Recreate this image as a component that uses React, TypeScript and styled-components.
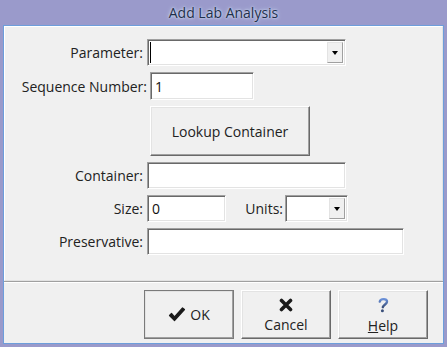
import React from "react";
import styled, { createGlobalStyle, css } from "styled-components";

const Global = createGlobalStyle`
  html, body { margin: 0; padding: 0; background: #9a9acb; }
  body { font-family: "Open Sans", "Noto Sans", "Liberation Sans", sans-serif; }
  * { box-sizing: border-box; }
`;

const Window = styled.div`
  width: 447px;
  height: 347px;
  background: #9a9acb;
  display: flex;
  flex-direction: column;
`;

const TitleBar = styled.div`
  height: 25px;
  display: flex;
  align-items: center;
  justify-content: center;
  font-size: 14px;
  color: #1f2f4a;
  text-shadow: 0 0 4px #c8dcf4, 0 0 2px #dfeaf8;
`;

const Client = styled.div`
  flex: 1;
  margin: 0 3px 3px 3px;
  border: 1px solid #6d9edb;
  background: #f0f0f0;
  display: flex;
  flex-direction: column;
`;

const FormPanel = styled.div`
  height: 255px;
  border-top: 1px solid #ffffff;
  border-left: 1px solid #ffffff;
  border-right: 1px solid #e2e2e2;
  border-bottom: 1px solid #e2e2e2;
  padding-top: 12px;
  display: flex;
  flex-direction: column;
  gap: 6px;
`;

const Row = styled.div<{ $h?: number; $indent?: number }>`
  display: flex;
  align-items: center;
  height: ${(p) => p.$h ?? 27}px;
  padding-left: ${(p) => p.$indent ?? 0}px;
`;

const Label = styled.label<{ $w: number; $gap?: number }>`
  width: ${(p) => p.$w}px;
  margin-right: ${(p) => p.$gap ?? 4}px;
  text-align: right;
  font-size: 14px;
  color: #222;
  white-space: nowrap;
`;

const sunken = css`
  border-top: 1px solid #a0a0a0;
  border-left: 1px solid #a0a0a0;
  border-right: 1px solid #ffffff;
  border-bottom: 1px solid #ffffff;
  box-shadow: inset 1px 1px 0 #696969, inset -1px -1px 0 #e3e3e3;
  background: #ffffff;
`;

const TextBox = styled.div<{ $w: number }>`
  ${sunken};
  width: ${(p) => p.$w}px;
  height: 100%;
  display: flex;
  align-items: center;
  padding-left: 4px;
  font-size: 14px;
  color: #111;
`;

const Combo = styled.div<{ $w: number }>`
  ${sunken};
  width: ${(p) => p.$w}px;
  height: 100%;
  display: flex;
  justify-content: flex-end;
  padding: 2px;
`;

const Caret = styled.div`
  width: 1px;
  height: 100%;
  background: #000;
  margin-right: auto;
`;

const DropBtn = styled.div`
  width: 16px;
  height: 100%;
  background: #f0f0f0;
  border-top: 1px solid #e3e3e3;
  border-left: 1px solid #e3e3e3;
  border-right: 1px solid #a0a0a0;
  border-bottom: 1px solid #a0a0a0;
  display: flex;
  align-items: center;
  justify-content: center;
  &::after {
    content: "";
    border-left: 3.5px solid transparent;
    border-right: 3.5px solid transparent;
    border-top: 4px solid #000;
  }
`;

const raised = css`
  background: #f0f0f0;
  border-top: 1px solid #ffffff;
  border-left: 1px solid #ffffff;
  border-right: 1px solid #696969;
  border-bottom: 1px solid #696969;
  box-shadow: inset -1px -1px 0 #a0a0a0, inset 1px 1px 0 #e3e3e3;
  font-family: inherit;
  color: #222;
  padding: 0;
`;

const LookupButton = styled.button`
  ${raised};
  width: 160px;
  height: 50px;
  font-size: 14px;
`;

const ButtonBar = styled.div`
  flex: 1;
  border-top: 1px solid #a0a0a0;
  box-shadow: inset 0 1px 0 #ffffff;
  display: flex;
  justify-content: flex-end;
  align-items: flex-start;
  gap: 7px;
  padding: 8px 15px 0 0;
`;

const DialogButton = styled.button<{ $default?: boolean }>`
  ${raised};
  width: 90px;
  height: 49px;
  font-size: 14px;
  display: flex;
  flex-direction: column;
  align-items: center;
  justify-content: center;
  gap: 3px;
  padding-top: 2px;
  ${(p) =>
    p.$default &&
    css`
      outline: 1px solid #7a7a7a;
      outline-offset: -1px;
      border-right-color: #555;
      border-bottom-color: #555;
      flex-direction: row;
      gap: 4px;
      padding-top: 0;
    `}
`;

const Underline = styled.span`
  text-decoration: underline;
`;

const CheckIcon = () => (
  <svg width="18" height="16" viewBox="0 0 18 16">
    <path d="M1.5 8.5 L6.5 13.5 L16.5 2.5 L14.5 1 L6.5 10 L3.5 6.5 Z" fill="#1a1a1a" stroke="#1a1a1a" strokeWidth="1.2" strokeLinejoin="round" />
  </svg>
);

const XIcon = () => (
  <svg width="14" height="14" viewBox="0 0 14 14">
    <path d="M2.5 2.5 L11.5 11.5 M11.5 2.5 L2.5 11.5" stroke="#1a1a1a" strokeWidth="3.6" strokeLinecap="round" />
  </svg>
);

const HelpIcon = () => (
  <svg width="12" height="16" viewBox="0 0 12 16">
    <defs>
      <linearGradient id="hq" x1="0" y1="0" x2="0" y2="1">
        <stop offset="0" stopColor="#6a90d8" />
        <stop offset="1" stopColor="#3a4f7a" />
      </linearGradient>
    </defs>
    <path d="M2.8 4.6 C3.2 1.4 10.6 1.2 10 4.8 C9.6 7.4 6.6 7.4 5.8 10.2" fill="none" stroke="url(#hq)" strokeWidth="2.4" strokeLinecap="round" />
    <circle cx="5.4" cy="13.8" r="1.5" fill="#3a4f7a" />
  </svg>
);

export default function App() {
  return (
    <>
      <Global />
      <Window>
        <TitleBar>Add Lab Analysis</TitleBar>
        <Client>
          <FormPanel>
            <Row>
              <Label $w={138}>Parameter:</Label>
              <Combo $w={199}>
                <Caret />
                <DropBtn />
              </Combo>
            </Row>
            <Row $h={28}>
              <Label $w={142} $gap={3}>Sequence Number:</Label>
              <TextBox $w={104}>1</TextBox>
            </Row>
            <Row $h={50} $indent={145}>
              <LookupButton>Lookup Container</LookupButton>
            </Row>
            <Row>
              <Label $w={138}>Container:</Label>
              <TextBox $w={199} />
            </Row>
            <Row>
              <Label $w={138}>Size:</Label>
              <TextBox $w={79}>0</TextBox>
              <Label $w={57} $gap={2}>Units:</Label>
              <Combo $w={63}>
                <DropBtn />
              </Combo>
            </Row>
            <Row>
              <Label $w={138}>Preservative:</Label>
              <TextBox $w={257} />
            </Row>
          </FormPanel>
          <ButtonBar>
            <DialogButton $default>
              <CheckIcon />
              <span>OK</span>
            </DialogButton>
            <DialogButton>
              <XIcon />
              <span>Cancel</span>
            </DialogButton>
            <DialogButton>
              <HelpIcon />
              <span>
                <Underline>H</Underline>elp
              </span>
            </DialogButton>
          </ButtonBar>
        </Client>
      </Window>
    </>
  );
}
